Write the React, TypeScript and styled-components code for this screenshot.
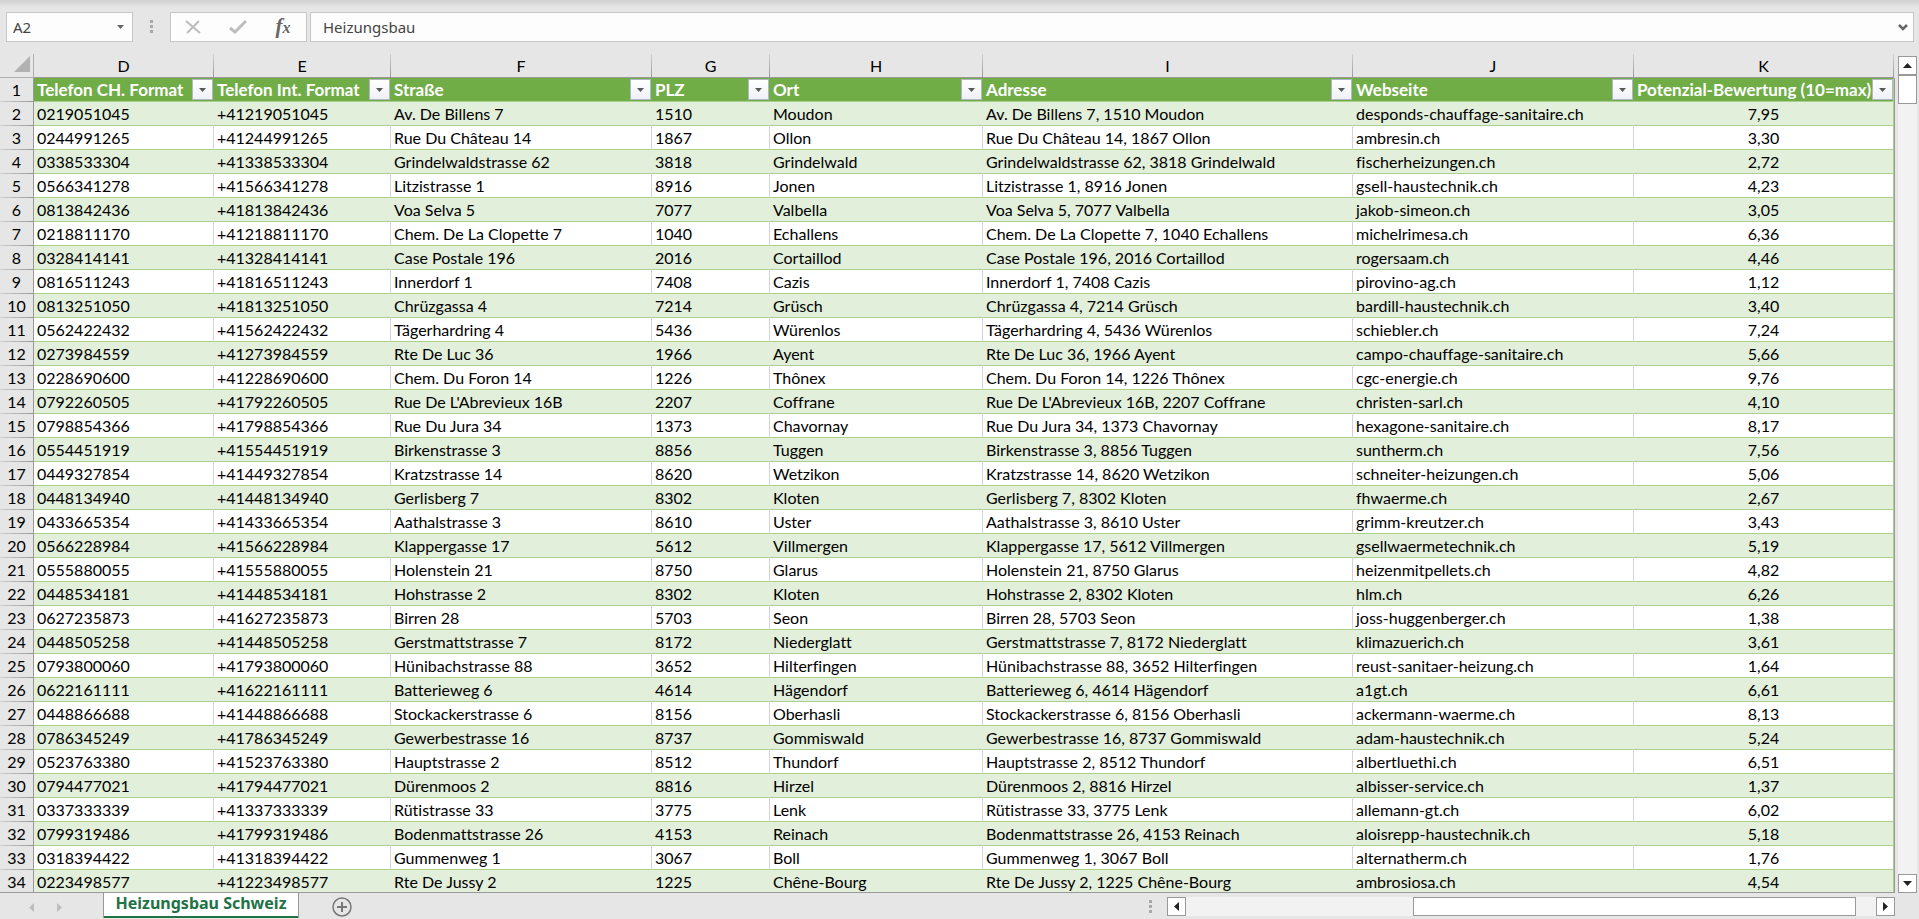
import React from "react";
import styled, { createGlobalStyle } from "styled-components";

const Global = createGlobalStyle`
  * { box-sizing: border-box; }
  body { margin: 0; background: #e6e6e6; color: #000; font-family: Lato, "Noto Sans", sans-serif; font-size: 16px; font-variant-ligatures: none; }
  button, input { font: inherit; color: inherit; }
`;

const Workbook = styled.main`
  height: 100vh;
  display: flex;
  flex-direction: column;
  overflow: hidden;
`;

const FormulaBar = styled.header`
  height: 54px;
  flex: none;
  display: flex;
  align-items: flex-start;
  padding: 12px 5px 0 6px;
  color: #444;
  background: linear-gradient(#d0d0d0, #e6e6e6 8px);
`;

const Box = styled.div<{ $width?: number }>`
  height: 30px;
  display: flex;
  align-items: center;
  background: #fdfdfd;
  border: 1px solid #c6c6c6;
  ${(p) => (p.$width ? `width: ${p.$width}px; flex: none;` : "flex: 1; min-width: 0; margin-left: 3px;")}
`;

const Field = styled.input<{ $indent: number }>`
  flex: 1;
  min-width: 0;
  height: 28px;
  padding: 0 0 0 ${(p) => p.$indent}px;
  border: 0;
  outline: 0;
  background: transparent;
  font-family: "Noto Sans", sans-serif;
  font-size: 15px;
`;

const IconButton = styled.button<{ $width: number }>`
  width: ${(p) => p.$width}px;
  height: 28px;
  flex: none;
  padding: 0;
  border: 0;
  background: transparent;
  display: flex;
  align-items: center;
  justify-content: center;
`;

const FunctionSign = styled.em`
  color: #666;
  font: italic 700 21px/24px "Liberation Serif", serif;

  small {
    font-size: 16px;
  }
`;

const Grip = styled.span<{ $margin: string }>`
  width: 3px;
  height: 13px;
  flex: none;
  margin: ${(p) => p.$margin};
  background: repeating-linear-gradient(#a8a8a8 0 3px, transparent 3px 5px);
`;

const Body = styled.div`
  flex: 1;
  min-height: 0;
  display: flex;
`;

const Sheet = styled.div`
  flex: 1;
  min-width: 0;
  margin-right: 3px;
  overflow: hidden;
  border-bottom: 1px solid #999;
`;

const Grid = styled.table`
  width: 1894px;
  table-layout: fixed;
  border-collapse: separate;
  border-spacing: 0;
`;

const Letter = styled.th`
  height: 24px;
  padding: 0 1px 0 0;
  font-weight: 400;
  line-height: 23px;
  border-bottom: 1px solid #999;
  background: linear-gradient(#d0d0d0, #999) right / 1px 100% no-repeat;
`;

const Corner = styled.td`
  height: 24px;
  padding: 0 3px 3px 0;
  border-bottom: 1px solid #b1b1b1;
  border-right: 1px solid #b1b1b1;
  svg { display: block; margin-left: auto; }
`;

const RowNumber = styled.th`
  height: 24px;
  padding: 0 0 1px;
  font-weight: 400;
  line-height: 23px;
  border-right: 1px solid #999;
  background: linear-gradient(90deg, #d0d0d0, #999) bottom / 100% 1px no-repeat;
`;

const Title = styled.th`
  height: 24px;
  padding: 0;
  color: #fff;
  background: #70ad47;
  border-bottom: 1px solid #a9d08e;

  &:last-child {
    border-right: 1px solid #a9d08e;
    box-shadow: 1px 0 #999;
  }
`;

const TitleInner = styled.div`
  height: 23px;
  display: flex;
  align-items: center;
  justify-content: space-between;
  padding: 0 1px 0 3px;
  font-size: 17px;
  line-height: 23px;
  white-space: nowrap;

  ${Title}:last-child & {
    padding-right: 0;
  }
`;

const Filter = styled.button`
  width: 21px;
  height: 21px;
  flex: none;
  padding: 0;
  display: flex;
  align-items: center;
  justify-content: center;
  border: 1px solid #b1b5c6;
  background: linear-gradient(#fff, #eff1f6);
`;

const Cell = styled.td<{ $band: boolean; $center: boolean }>`
  height: 24px;
  padding: 0 0 0 ${(p) => (p.$center ? 0 : 3)}px;
  line-height: 23px;
  white-space: nowrap;
  text-align: ${(p) => (p.$center ? "center" : "left")};
  background: ${(p) => (p.$band ? "#e2efda" : "#fff")};
  border-bottom: 1px solid #a9d08e;
  border-right: 1px solid ${(p) => (p.$center ? "#a9d08e" : p.$band ? "#e2efda" : "#d4d4d4")};

  &:last-child {
    box-shadow: 1px 0 #999;
  }
`;

const VerticalScroll = styled.div`
  width: 19px;
  margin: 2px 2px 0 0;
  flex: none;
  display: flex;
  flex-direction: column;
  background: #f2f2f2;
`;

const ScrollButton = styled.button`
  width: 19px;
  height: 19px;
  flex: none;
  padding: 0;
  display: flex;
  align-items: center;
  justify-content: center;
  background: #fff;
  border: 1px solid #999;
`;

const VerticalThumb = styled.div`
  height: 29px;
  background: #fff;
  border: 1px solid #999;
`;

const Spacer = styled.div`
  flex: 1;
`;

const Footer = styled.footer`
  height: 26px;
  flex: none;
  display: flex;
  align-items: flex-start;
`;

const SheetNav = styled.nav`
  width: 103px;
  flex: none;
  display: flex;
  padding-left: 17px;
`;

const Tab = styled.button`
  width: 196px;
  height: 25px;
  flex: none;
  padding: 0 0 5px;
  color: #217346;
  background: #fff;
  border: solid #999;
  border-width: 0 1px;
  box-shadow: inset 0 -2px #217346;
  font-family: "Noto Sans", sans-serif;
  font-weight: 700;
  line-height: 20px;
`;

const HorizontalScroll = styled.div`
  width: 728px;
  height: 19px;
  margin: 4px 24px 0 0;
  flex: none;
  display: flex;
  background: #f2f2f2;
`;

const HorizontalThumb = styled.div`
  width: 443px;
  margin: 0 20px 0 auto;
  background: #fff;
  border: 1px solid #999;
`;

const columns = [
  { letter: "D", title: "Telefon CH. Format", width: 180 },
  { letter: "E", title: "Telefon Int. Format", width: 177 },
  { letter: "F", title: "Straße", width: 261 },
  { letter: "G", title: "PLZ", width: 118 },
  { letter: "H", title: "Ort", width: 213 },
  { letter: "I", title: "Adresse", width: 370 },
  { letter: "J", title: "Webseite", width: 281 },
  { letter: "K", title: "Potenzial-Bewertung (10=max)", width: 260 },
];

const companies = `0219051045|Av. De Billens 7|1510|Moudon|desponds-chauffage-sanitaire.ch|7,95
0244991265|Rue Du Château 14|1867|Ollon|ambresin.ch|3,30
0338533304|Grindelwaldstrasse 62|3818|Grindelwald|fischerheizungen.ch|2,72
0566341278|Litzistrasse 1|8916|Jonen|gsell-haustechnik.ch|4,23
0813842436|Voa Selva 5|7077|Valbella|jakob-simeon.ch|3,05
0218811170|Chem. De La Clopette 7|1040|Echallens|michelrimesa.ch|6,36
0328414141|Case Postale 196|2016|Cortaillod|rogersaam.ch|4,46
0816511243|Innerdorf 1|7408|Cazis|pirovino-ag.ch|1,12
0813251050|Chrüzgassa 4|7214|Grüsch|bardill-haustechnik.ch|3,40
0562422432|Tägerhardring 4|5436|Würenlos|schiebler.ch|7,24
0273984559|Rte De Luc 36|1966|Ayent|campo-chauffage-sanitaire.ch|5,66
0228690600|Chem. Du Foron 14|1226|Thônex|cgc-energie.ch|9,76
0792260505|Rue De L'Abrevieux 16B|2207|Coffrane|christen-sarl.ch|4,10
0798854366|Rue Du Jura 34|1373|Chavornay|hexagone-sanitaire.ch|8,17
0554451919|Birkenstrasse 3|8856|Tuggen|suntherm.ch|7,56
0449327854|Kratzstrasse 14|8620|Wetzikon|schneiter-heizungen.ch|5,06
0448134940|Gerlisberg 7|8302|Kloten|fhwaerme.ch|2,67
0433665354|Aathalstrasse 3|8610|Uster|grimm-kreutzer.ch|3,43
0566228984|Klappergasse 17|5612|Villmergen|gsellwaermetechnik.ch|5,19
0555880055|Holenstein 21|8750|Glarus|heizenmitpellets.ch|4,82
0448534181|Hohstrasse 2|8302|Kloten|hlm.ch|6,26
0627235873|Birren 28|5703|Seon|joss-huggenberger.ch|1,38
0448505258|Gerstmattstrasse 7|8172|Niederglatt|klimazuerich.ch|3,61
0793800060|Hünibachstrasse 88|3652|Hilterfingen|reust-sanitaer-heizung.ch|1,64
0622161111|Batterieweg 6|4614|Hägendorf|a1gt.ch|6,61
0448866688|Stockackerstrasse 6|8156|Oberhasli|ackermann-waerme.ch|8,13
0786345249|Gewerbestrasse 16|8737|Gommiswald|adam-haustechnik.ch|5,24
0523763380|Hauptstrasse 2|8512|Thundorf|albertluethi.ch|6,51
0794477021|Dürenmoos 2|8816|Hirzel|albisser-service.ch|1,37
0337333339|Rütistrasse 33|3775|Lenk|allemann-gt.ch|6,02
0799319486|Bodenmattstrasse 26|4153|Reinach|aloisrepp-haustechnik.ch|5,18
0318394422|Gummenweg 1|3067|Boll|alternatherm.ch|1,76
0223498577|Rte De Jussy 2|1225|Chêne-Bourg|ambrosiosa.ch|4,54`
  .split("\n")
  .map((line) => {
    const [phone, street, zip, city, site, score] = line.split("|");
    return [phone, `+41${phone.slice(1)}`, street, zip, city, `${street}, ${zip} ${city}`, site, score];
  });

const arrows = {
  up: "M0 5 L4.5 0 L9 5Z",
  down: "M0 0 H9 L4.5 5Z",
  left: "M5 0 V9 L0 4.5Z",
  right: "M0 0 V9 L5 4.5Z",
};

function Arrow({ to, size = 9, color = "#222" }: { to: keyof typeof arrows; size?: number; color?: string }) {
  const flat = to === "up" || to === "down";
  const short = Math.round((size * 5) / 9);
  return (
    <svg width={flat ? size : short} height={flat ? short : size} viewBox={flat ? "0 0 9 5" : "0 0 5 9"} preserveAspectRatio="none" aria-hidden>
      <path d={arrows[to]} fill={color} />
    </svg>
  );
}

export default function App() {
  return (
    <Workbook>
      <Global />
      <FormulaBar>
        <Box $width={127}>
          <Field $indent={6} aria-label="Namenfeld" defaultValue="A2" />
          <IconButton $width={24} aria-label="Namen anzeigen"><Arrow to="down" size={7} color="#666" /></IconButton>
        </Box>
        <Grip $margin="8px 17px 0" />
        <Box $width={137}>
          <IconButton $width={44} aria-label="Abbrechen">
            <svg width="16" height="14" viewBox="0 0 16 14"><path d="M1 1 L15 13 M14 1 L2 13" stroke="#bdbdbd" strokeWidth="2" fill="none" /></svg>
          </IconButton>
          <IconButton $width={46} aria-label="Eingeben">
            <svg width="18" height="14" viewBox="0 0 18 14"><path d="M1 8 L6 12 L17 1" stroke="#bdbdbd" strokeWidth="3" fill="none" /></svg>
          </IconButton>
          <IconButton $width={44} aria-label="Funktion einfügen">
            <FunctionSign>f<small>x</small></FunctionSign>
          </IconButton>
        </Box>
        <Box>
          <Field $indent={12} aria-label="Bearbeitungsleiste" defaultValue="Heizungsbau" />
          <IconButton $width={21} aria-label="Bearbeitungsleiste erweitern">
            <svg width="10" height="7" viewBox="0 0 10 7"><path d="M1 1 L5 5 L9 1" stroke="#666" strokeWidth="2.5" fill="none" /></svg>
          </IconButton>
        </Box>
      </FormulaBar>
      <Body>
        <Sheet>
          <Grid>
            <colgroup>
              <col width={34} />
              {columns.map((c) => <col key={c.letter} width={c.width} />)}
            </colgroup>
            <thead>
              <tr>
                <Corner><svg width="16" height="16" viewBox="0 0 16 16" aria-hidden><path d="M16 0 V16 H0Z" fill="#b1b1b1" /></svg></Corner>
                {columns.map((c) => <Letter key={c.letter} scope="col">{c.letter}</Letter>)}
              </tr>
              <tr>
                <RowNumber scope="row">1</RowNumber>
                {columns.map((c) => (
                  <Title key={c.letter} scope="col">
                    <TitleInner>{c.title}<Filter aria-label={`${c.title} filtern`}><Arrow to="down" size={7} color="#595959" /></Filter></TitleInner>
                  </Title>
                ))}
              </tr>
            </thead>
            <tbody>
              {companies.map((row, r) => (
                <tr key={row[0]}>
                  <RowNumber scope="row">{r + 2}</RowNumber>
                  {row.map((value, c) => <Cell key={c} $band={r % 2 === 0} $center={c === 7}>{value}</Cell>)}
                </tr>
              ))}
            </tbody>
          </Grid>
        </Sheet>
        <VerticalScroll>
          <ScrollButton aria-label="Nach oben"><Arrow to="up" /></ScrollButton>
          <VerticalThumb />
          <Spacer />
          <ScrollButton aria-label="Nach unten"><Arrow to="down" /></ScrollButton>
        </VerticalScroll>
      </Body>
      <Footer>
        <SheetNav aria-label="Tabellenblätter">
          <IconButton $width={28} aria-label="Vorheriges Blatt"><Arrow to="left" color="#bdbdbd" /></IconButton>
          <IconButton $width={28} aria-label="Nächstes Blatt"><Arrow to="right" color="#bdbdbd" /></IconButton>
        </SheetNav>
        <Tab>Heizungsbau Schweiz</Tab>
        <IconButton $width={86} aria-label="Neues Blatt">
          <svg width="20" height="20" viewBox="0 0 20 20" fill="none" stroke="#777"><circle cx="10" cy="10" r="9" strokeWidth="1.5" /><path d="M10 5 V15 M5 10 H15" strokeWidth="2" /></svg>
        </IconButton>
        <Spacer />
        <Grip $margin="7px 15px 0 0" />
        <HorizontalScroll>
          <ScrollButton aria-label="Nach links"><Arrow to="left" /></ScrollButton>
          <HorizontalThumb />
          <ScrollButton aria-label="Nach rechts"><Arrow to="right" /></ScrollButton>
        </HorizontalScroll>
      </Footer>
    </Workbook>
  );
}
